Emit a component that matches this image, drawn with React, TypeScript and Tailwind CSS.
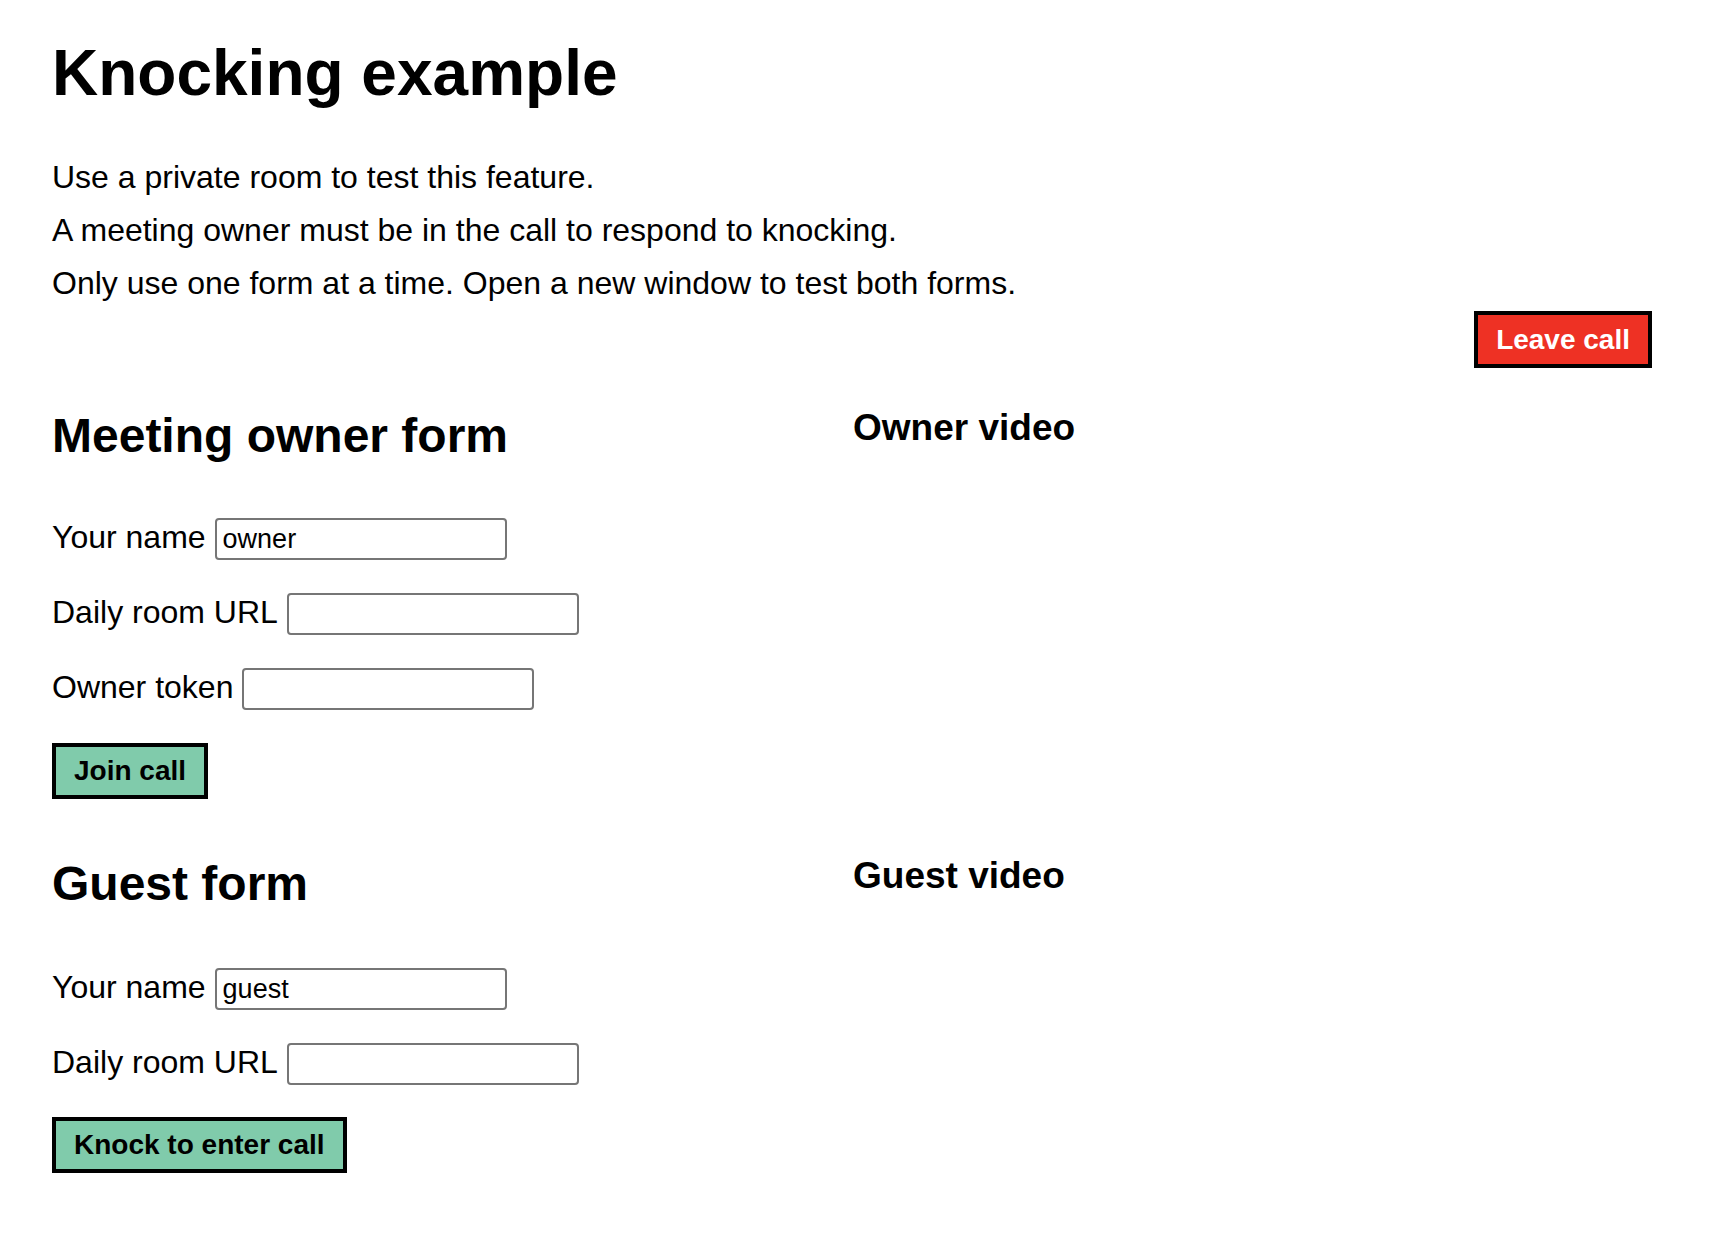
import React from 'react';

interface FieldProps {
  label: string;
  value?: string;
}

function Field({ label, value = '' }: FieldProps) {
  return (
    <div className="flex items-start gap-[9px]">
      <label className="text-[32px] leading-[38px] whitespace-nowrap">{label}</label>
      <input
        type="text"
        defaultValue={value}
        className="w-[292px] h-[42px] border-2 border-[#767676] rounded-[4px] px-[6px] text-[27px] text-black bg-white outline-none font-['Liberation_Sans',Arial,sans-serif]"
      />
    </div>
  );
}

function ActionButton({ children, tone }: { children: React.ReactNode; tone: 'green' | 'red' }) {
  return (
    <button
      className={`h-[56px] border-4 border-black px-[18px] text-[28px] leading-[48px] font-bold whitespace-nowrap ${
        tone === 'green' ? 'bg-[#80cbab] text-black' : 'bg-[#ee3124] text-white'
      }`}
    >
      {children}
    </button>
  );
}

export default function App() {
  return (
    <div className="min-h-screen bg-white text-black pl-[52px] pr-[82px] pt-[36px] font-['Liberation_Sans',Arial,sans-serif]">
      <h1 className="text-[64px] leading-[74px] font-bold">Knocking example</h1>

      <div className="mt-[41px] text-[32px] leading-[53px]">
        <p>Use a private room to test this feature.</p>
        <p>A meeting owner must be in the call to respond to knocking.</p>
        <p>Only use one form at a time. Open a new window to test both forms.</p>
      </div>

      <div className="flex justify-end mt-[1px]">
        <button className="h-[57px] border-4 border-black bg-[#ee3124] text-white px-[18px] text-[28px] leading-[49px] font-bold">
          Leave call
        </button>
      </div>

      <div className="grid grid-cols-[801px_1fr] mt-[38px]">
        <div className="flex flex-col">
          <h2 className="text-[48px] leading-[60px] font-bold">Meeting owner form</h2>
          <div className="mt-[52px] flex flex-col items-start gap-[33px]">
            <Field label="Your name" value="owner" />
            <Field label="Daily room URL" />
            <Field label="Owner token" />
            <ActionButton tone="green">Join call</ActionButton>
          </div>
        </div>
        <div>
          <h3 className="text-[37px] leading-[43px] font-bold">Owner video</h3>
        </div>
      </div>

      <div className="grid grid-cols-[801px_1fr] mt-[55px] pb-[60px]">
        <div className="flex flex-col">
          <h2 className="text-[48px] leading-[60px] font-bold">Guest form</h2>
          <div className="mt-[54px] flex flex-col items-start gap-[33px]">
            <Field label="Your name" value="guest" />
            <Field label="Daily room URL" />
            <div className="-mt-[1px]">
              <ActionButton tone="green">Knock to enter call</ActionButton>
            </div>
          </div>
        </div>
        <div>
          <h3 className="text-[37px] leading-[43px] font-bold">Guest video</h3>
        </div>
      </div>
    </div>
  );
}
